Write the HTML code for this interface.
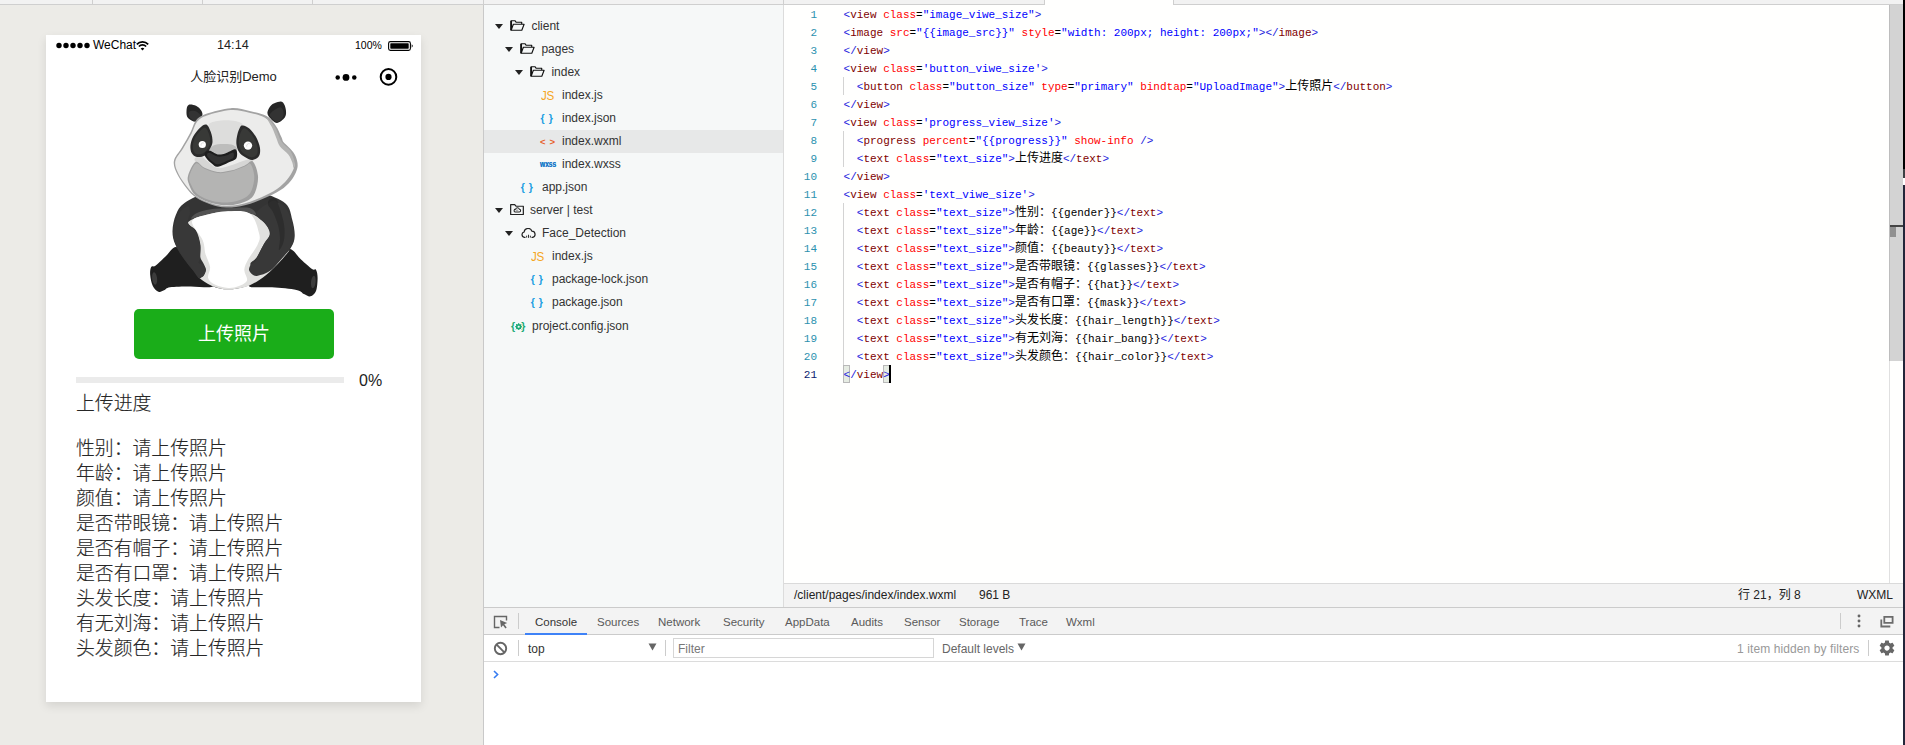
<!DOCTYPE html>
<html lang="zh-CN"><head><meta charset="utf-8"><title>人脸识别Demo</title>
<style>
*{box-sizing:border-box;margin:0;padding:0}
html,body{width:1905px;height:745px;overflow:hidden;background:#fff}
body{position:relative;font-family:"Liberation Sans","Noto Sans CJK SC",sans-serif;font-size:12px;color:#333}
.abs{position:absolute}
#sim{left:0;top:0;width:483px;height:745px;background:#ecebe7}
#topstrip{left:0;top:0;width:1903px;height:5px;background:#f2f2f2;border-bottom:1px solid #cfcfcf}
.tsep{position:absolute;top:0;width:1px;height:5px;background:#cfcfcf}
#phone{left:46px;top:35px;width:375px;height:667px;background:#fff;box-shadow:0 4px 9px rgba(0,0,0,.10)}
#tree{left:483px;top:5px;width:301px;height:602px;background:#f6f8f8;border-left:1px solid #c9c9c9;border-right:1px solid #dcdcdc}
.row{position:absolute;left:0;width:299px;height:23px;line-height:23px;white-space:nowrap;color:#333;font-size:12px}
.row.sel{background:#e7e8e8}
.row span.t{position:absolute;top:0}
.row svg{position:absolute}
#editor{left:784px;top:5px;width:1105px;height:578px;background:#fffffe}
.ln{position:absolute;margin-top:.7px;left:0;width:33px;text-align:right;color:#2b91af;font-family:"Liberation Mono",monospace;font-size:11px;height:18px;line-height:18px}
.cl{position:absolute;margin-top:.7px;letter-spacing:-.012px;left:59.6px;white-space:pre;font-family:"Liberation Mono","Noto Sans CJK SC",monospace;font-size:11px;height:18px;line-height:18px;color:#000}
.cl .cj{font-size:12px;line-height:0;font-family:"Noto Sans CJK SC",sans-serif}
.d{color:#2222dd}.tg{color:#800000}.an{color:#ff0000}.av{color:#0000ff}
.guide{position:absolute;left:59px;width:1px;background:#d3d3d3}
#status{left:784px;top:583px;width:1119px;height:24px;background:#f3f3f3;border-top:1px solid #dadada;font-size:12px;color:#222;line-height:23px}
#dev{left:483px;top:607px;width:1420px;height:138px;background:#fff;border-left:1px solid #c9c9c9}
#devtabs{left:0;top:0;width:1419px;height:28px;background:#f3f3f3;border-top:1px solid #cbcbcb;border-bottom:1px solid #cbcbcb}
.tab{position:absolute;top:1px;height:26px;line-height:27px;color:#5a5a5a;font-size:11.5px;white-space:nowrap}
#devfilter span{font-size:12px}
#devfilter{left:0;top:28px;width:1419px;height:27px;background:#fff;border-bottom:1px solid #dcdcdc}
.vsep{position:absolute;width:1px;background:#cccccc}
</style></head><body>
<div id="sim" class="abs"></div>
<div id="phone" class="abs">
<!-- status bar (coords relative to phone: page x-46, y-35) -->
<svg class="abs" style="left:10px;top:7px" width="34" height="7" viewBox="0 0 34 7"><circle cx="3" cy="3.5" r="2.7" fill="#000"/><circle cx="10" cy="3.5" r="2.7" fill="#000"/><circle cx="17" cy="3.5" r="2.7" fill="#000"/><circle cx="24" cy="3.5" r="2.7" fill="#000"/><circle cx="31" cy="3.5" r="2.7" fill="#000"/></svg>
<span class="abs" style="left:47px;top:2px;font-size:12px;line-height:16px;color:#000">WeChat</span>
<svg class="abs" style="left:90px;top:5.5px" width="13" height="10" viewBox="0 0 13 10"><path d="M0.8 3.3a8 8 0 0 1 11.4 0" fill="none" stroke="#000" stroke-width="1.8"/><path d="M2.9 5.5a5 5 0 0 1 7.2 0" fill="none" stroke="#000" stroke-width="1.8"/><path d="M4.7 7.5a2.6 2.6 0 0 1 3.6 0L6.5 9.6z" fill="#000"/></svg>
<span class="abs" style="left:171px;top:2px;font-size:12.7px;line-height:17px;color:#222">14:14</span>
<span class="abs" style="left:309px;top:3px;font-size:10.5px;line-height:15px;color:#000">100%</span>
<svg class="abs" style="left:342px;top:5.8px" width="26" height="11" viewBox="0 0 26 11"><rect x="0.6" y="0.6" width="21.8" height="8.8" rx="1.8" fill="none" stroke="#000" stroke-width="1.1"/><rect x="2.3" y="2.3" width="18.4" height="5.4" rx="0.6" fill="#000"/><path d="M23.7 3.3a2.2 2.2 0 0 1 0 3.4z" fill="#000"/></svg>
<!-- nav bar -->
<span class="abs" style="left:0;top:32px;width:375px;text-align:center;font-size:13px;line-height:20px;color:#222">人脸识别Demo</span>
<svg class="abs" style="left:289px;top:38px" width="22" height="9" viewBox="0 0 22 9"><circle cx="2.7" cy="4.5" r="2.25" fill="#000"/><circle cx="11" cy="4.4" r="3.4" fill="#000"/><circle cx="19.3" cy="4.5" r="2.25" fill="#000"/></svg>
<svg class="abs" style="left:333px;top:33px" width="19" height="19" viewBox="0 0 19 19"><circle cx="9.5" cy="8.9" r="7.8" fill="none" stroke="#000" stroke-width="2"/><circle cx="9.5" cy="8.9" r="3.1" fill="#000"/></svg>
<svg class="abs" style="left:84px;top:60px" width="210" height="210" viewBox="130 95 210 210">
<path d="M176 247C172.7 246.7 169.4 252.9 166 256C162.6 259.1 158.2 263.8 155.7 265.6C153.2 267.4 152.1 265.4 151.2 267C150.3 268.6 149.9 271.8 150.2 275C150.5 278.2 151.4 283.2 152.8 286C154.2 288.8 156.6 291.1 158.5 291.8C160.4 292.5 162.1 291.1 164 290.3C165.9 289.5 165.7 287.9 170 287.2C174.3 286.5 182.8 286.5 190 286.4C197.2 286.2 211.3 288.7 213 286.3C214.7 283.9 204.5 276.7 200 272C195.5 267.3 190 262.2 186 258C182 253.8 179.3 247.3 176 247Z" fill="#1f1f1f"/>
<path d="M290 249C293.5 249.1 297.3 256.2 301 259.5C304.7 262.8 309.5 267.3 312 269C314.5 270.7 315.1 268.3 316 269.8C316.9 271.3 317.6 274.5 317.6 278C317.6 281.5 317.2 287.9 316 291C314.8 294.1 312.5 295.8 310.5 296.3C308.5 296.8 306.3 295.1 304 294C301.7 292.9 301.8 291 296.5 289.9C291.2 288.8 279.9 287.9 272 287.3C264.1 286.7 250.3 288.4 249 286.2C247.7 284 258.8 278.5 264 274C269.2 269.5 275.7 263.2 280 259C284.3 254.8 286.5 248.9 290 249Z" fill="#1f1f1f"/>
<ellipse cx="154.6" cy="278.5" rx="2.5" ry="6.2" fill="#3c3c3c" transform="rotate(-6 154.6 278.5)"/>
<ellipse cx="313.3" cy="282" rx="2.3" ry="6.2" fill="#3c3c3c" transform="rotate(6 313.3 282)"/>
<path d="M188.5 104.9C190.1 104 193.9 104.9 196 105.8C198.1 106.7 200.2 108.8 201.2 110.5C202.2 112.2 203 114.1 202.1 116C201.2 117.9 198.3 121.5 196 121.8C193.7 122.1 189.6 119.8 188 118C186.4 116.2 186.4 113.2 186.5 111C186.6 108.8 186.9 105.8 188.5 104.9Z" fill="#262626"/>
<path d="M267.4 112.5C267.5 110.3 269.5 107 271.2 105.3C272.9 103.5 275.8 102.5 277.8 102C279.8 101.5 281.6 101.1 283 102.4C284.4 103.7 285.6 107.5 285.9 110C286.2 112.5 286.3 115.4 284.8 117.6C283.3 119.8 279.4 122.8 277 123C274.6 123.2 272.1 120.2 270.5 118.5C268.9 116.8 267.3 114.7 267.4 112.5Z" fill="#262626"/>
<path d="M189 112C189.8 110.8 193.2 110.6 195 111C196.8 111.4 199.1 113.3 200 114.5C200.9 115.7 201.2 116.9 200.5 118C199.8 119.1 197.8 121 196 121C194.2 121 191.2 119.5 190 118C188.8 116.5 188.2 113.2 189 112Z" fill="#333"/>
<path d="M270 114C270.8 112.5 274.2 110.1 276 109C277.8 107.9 279.8 107 281 107.5C282.2 108 283.2 110.2 283.5 112C283.8 113.8 283.6 116.3 282.5 118C281.4 119.7 278.8 122 277 122C275.2 122 272.7 119.3 271.5 118C270.3 116.7 269.2 115.5 270 114Z" fill="#333"/>
<path d="M184.5 203C179.2 206.8 177.9 210.2 175.9 214.8C173.9 219.5 172.6 226 172.5 230.9C172.4 235.8 173.3 239.6 175.2 244.3C177.1 249 180 253.7 183.9 259.1C187.8 264.5 194 272 198.7 276.5C203.4 281 207.2 283.8 212.1 285.9C217 288 222.4 289.3 228.2 289.3C234 289.3 240.7 288.2 247 285.9C253.3 283.5 260 279.7 265.8 275.2C271.6 270.7 277.6 263.8 281.9 259.1C286.1 254.4 289.2 250.8 291.3 247C293.4 243.2 294.5 240.7 294.7 236.2C294.9 231.7 293.8 225.5 292.3 220.1C290.8 214.7 290.6 208 285.5 203.5C280.4 199 270.2 195.2 262 193C253.8 190.8 245 190.2 236 190C227 189.8 216.6 189.8 208 192C199.4 194.2 189.8 199.2 184.5 203Z" fill="#343434"/>
<path d="M268 202C268.3 199.2 273.8 197.3 276 199C278.2 200.7 279.7 207.2 281 212C282.3 216.8 283.7 223.3 284 228C284.3 232.7 284 239.3 283 240C282 240.7 279.5 236 278 232C276.5 228 275.7 221 274 216C272.3 211 267.7 204.8 268 202Z" fill="#2a2a2a"/>
<path d="M191.3 218.8C190.4 218.4 193 215 196 213.4C199 211.8 203.7 210.3 209.4 209.4C215.1 208.5 223.3 208.2 230 208C236.7 207.8 245.3 206.9 249.7 208C254.1 209.1 256.4 213.9 256.4 214.8C256.4 215.7 254.8 214 249.7 213.4C244.5 212.8 233.6 211 225.5 211.4C217.4 211.8 207.1 214.9 201.4 216.1C195.7 217.3 192.2 219.2 191.3 218.8Z" fill="#525252"/>
<path d="M188 222.8C188.9 220.4 195.2 218 201.4 216.1C207.7 214.2 217.4 211.8 225.5 211.4C233.6 211 243.4 211.7 249.7 213.4C256 215.1 259.8 218.1 263.1 221.5C266.5 224.9 269.8 229.6 269.8 233.6C269.8 237.6 265.3 241.6 263.1 245.6C260.9 249.6 258.5 254.6 256.4 257.7C254.3 260.8 250.1 261.7 250.4 264.4C250.7 267.1 253.9 274.1 258 274C262.1 273.9 269.8 267.9 275 264C280.2 260.1 288.3 250.9 289.3 250.3C290.3 249.7 284.9 256.4 281 260.5C277.1 264.6 271.2 271 265.8 275.2C260.4 279.4 254.7 283.5 248.4 285.9C242.1 288.2 234.2 289.3 228.2 289.3C222.1 289.3 217 287.9 212.1 285.9C207.2 283.9 200.2 278.8 198.7 277.2C197.2 275.6 201.8 277.7 203 276.5C204.2 275.3 205.9 272.2 206 270C206.1 267.8 204.4 265.7 203.5 263.5C202.6 261.3 200.8 260.2 200.3 257C199.8 253.8 201 248.7 200.3 244.3C199.6 239.9 198.1 234.1 196 230.5C193.9 226.9 187.1 225.2 188 222.8Z" fill="#e1e1df"/>
<path d="M192 221.5C192.9 217.2 202.4 216.2 208 214.5C213.6 212.8 218.6 211.6 225.5 211.4C232.4 211.2 244.1 209.7 249.7 213.4C255.3 217.1 257.8 228.4 259.1 233.6C260.5 238.8 259.6 240.1 257.8 244.3C256 248.6 250.7 254.9 248.4 259.1C246.2 263.4 244.5 266.2 244.3 269.8C244.1 273.4 247.9 277.8 247 280.5C246.1 283.2 242.1 284.7 239 285.9C235.9 287.1 232.2 288.1 228.2 287.9C224.2 287.7 218.2 286.3 214.8 284.6C211.5 282.9 208.9 280.8 208.1 277.9C207.3 275 210.5 271.1 210.1 267.1C209.7 263.1 206.6 258.2 205.4 253.7C204.2 249.2 204.9 245.7 202.7 240.3C200.5 234.9 191.1 225.8 192 221.5Z" fill="#ffffff"/>
<path d="M188 206C186.1 206.2 181 209.8 178.5 214C176 218.2 173.6 225.9 173.2 231C172.8 236.1 173.9 239.8 175.8 244.5C177.7 249.2 181.6 255.2 184.5 259.5C187.4 263.8 190.6 267.4 193 270.5C195.4 273.6 197 277 198.7 277.9C200.4 278.8 202.3 277.1 203.4 275.8C204.5 274.5 205.5 271.7 205.4 269.8C205.3 267.9 203.8 265.5 202.7 264.4C201.6 263.3 199.1 264.2 198.7 263.1C198.2 262 199.8 260.8 200 257.7C200.2 254.6 200.7 248.6 200 244.3C199.3 240.1 198 235.8 196 232.2C194 228.6 189 226 188 222.8C187 219.6 190 215.8 190 213C190 210.2 189.9 205.8 188 206Z" fill="#383838"/>
<path d="M283 205C286.2 207.8 289.7 214.8 291.5 220C293.3 225.2 294.2 231.6 294 236.2C293.8 240.8 292.7 243.6 290.5 247.5C288.3 251.4 284.4 255.6 281 259.5C277.6 263.4 273.7 268.4 269.8 271.1C265.9 273.8 260.7 275.2 257.8 275.8C254.9 276.4 253.9 275.5 252.4 274.5C250.9 273.5 249.2 271.5 249 269.8C248.8 268.1 250 265.8 251 264.4C252 263 253.8 263.5 255.1 261.7C256.4 259.9 257.5 256.8 259.1 253.7C260.7 250.6 262.6 246.3 264.5 243C266.4 239.7 270.3 236.7 270.5 233.6C270.7 230.5 268.2 227.3 265.8 224.2C263.4 221.1 257 217.7 256.4 214.8C255.8 211.9 259.4 209 262 207C264.6 205 268.5 203.3 272 203C275.5 202.7 279.8 202.2 283 205Z" fill="#383838"/>
<path d="M268 204C268.5 202.2 273.8 199.3 276 201C278.2 202.7 280.1 209.3 281.5 214C282.9 218.7 284.2 224.3 284.5 229C284.8 233.7 284.4 238.5 283.5 242C282.6 245.5 279.6 250.7 279 250C278.4 249.3 280.2 242.2 280 238C279.8 233.8 279.2 229.3 278 225C276.8 220.7 274.7 215.5 273 212C271.3 208.5 267.5 205.8 268 204Z" fill="#2d2d2d"/>
<path d="M173.9 161C173.1 165.4 175.1 169.6 177.2 174.1C179.3 178.6 183.5 184.3 186.6 188.2C189.7 192.1 192.1 194.9 196 197.6C199.9 200.3 205.1 202.5 210.1 204.2C215.1 205.8 220.3 207.3 226.1 207.5C231.9 207.7 238.6 206.7 244.9 205.2C251.2 203.7 257.8 201.1 263.7 198.6C269.6 196.1 276.1 193.1 280.6 190.1C285.1 187.1 288.2 184 290.9 180.7C293.6 177.4 295.5 173.4 296.6 170.4C297.7 167.4 297.8 165.6 297.5 162.9C297.2 160.2 296.1 157 294.7 154.4C293.3 151.8 290.9 149.6 289 147.5C287.1 145.4 284.6 143.7 283.4 142C282.1 140.3 282.8 140 281.5 137.3C280.2 134.6 278.4 129.5 275.9 126C273.4 122.5 270.9 118.6 266.5 116.1C262.1 113.6 255.5 112.3 249.6 111C243.7 109.7 238 107.7 230.8 108.2C223.6 108.7 212.2 111.8 206.4 113.8C200.6 115.8 198.7 117.3 196 120.4C193.3 123.5 192.8 128.1 190.4 132.6C188.1 137.1 184.7 142.9 181.9 147.6C179.2 152.3 174.7 156.6 173.9 161Z" fill="#a3a3a3"/>
<path d="M175.3 161.2C174.5 165.5 176.4 169.4 178.4 173.8C180.4 178.2 184.5 183.6 187.6 187.4C190.7 191.2 193 193.8 196.8 196.4C200.6 199 205.6 201.3 210.5 202.9C215.4 204.5 220.5 205.9 226.1 206C231.7 206.1 238.3 205.1 244.2 203.6C250.1 202.1 256 199.6 261.5 197.2C267 194.8 272.7 191.9 277 189C281.3 186.1 284.5 182.7 287.2 179.5C289.9 176.3 292 172.6 293.2 169.8C294.4 167.1 294.5 165.4 294.2 163C293.9 160.6 292.8 157.7 291.5 155.4C290.2 153.2 288.2 151.4 286.5 149.5C284.8 147.6 282.3 145.9 281 144C279.7 142.1 279.9 140.6 278.6 137.8C277.4 135 275.8 130.5 273.5 127.2C271.2 123.9 269.1 120.2 265 117.8C260.9 115.4 254.9 114 249.2 112.7C243.5 111.4 237.8 109.5 230.8 110C223.8 110.5 212.6 113.5 207 115.4C201.4 117.3 199.7 118.6 197.2 121.6C194.7 124.6 194.1 128.8 191.8 133.2C189.5 137.6 185.9 143.5 183.2 148.2C180.4 152.9 176.1 156.9 175.3 161.2Z" fill="#ececeb"/>
<path d="M266.5 117.5C266.9 117.3 272.8 123.6 275 127C277.2 130.4 278.2 135.2 279.5 138C280.8 140.8 281.2 141.3 283 143.5C284.8 145.7 288.6 147.9 290.5 151C292.4 154.1 294 159.2 294.5 162C295 164.8 293.9 167.9 293.5 168C293.1 168.1 293.2 164.8 292.3 162.5C291.4 160.2 290.4 157.2 288.3 154.5C286.2 151.8 282 149.2 280 146.5C278 143.8 277.8 141.6 276.5 138.5C275.2 135.4 274 131.5 272.3 128C270.6 124.5 266.1 117.7 266.5 117.5Z" fill="#b4b4b3"/>
<path d="M209 124C210.6 121.9 216.7 121 221 120.5C225.3 120 231.3 120.2 235 121C238.7 121.8 242.4 122.7 243 125C243.6 127.3 239.4 131.3 238.5 135C237.6 138.7 238.2 144.2 237.5 147C236.8 149.8 236.1 150.8 234 152C231.9 153.2 227.8 154 225 154.5C222.2 155 219.7 155.5 217 155C214.3 154.5 209.8 153.5 209 151.5C208.2 149.5 211.6 146.1 212 143C212.4 139.9 212 136.2 211.5 133C211 129.8 207.4 126.1 209 124Z" fill="#dddddc"/>
<path d="M213.5 145.5C215.8 144.3 219.8 144.1 223 144C226.2 143.9 230.7 144 233 145C235.3 146 238.2 148.2 237 150C235.8 151.8 229.5 154.6 226 155.5C222.5 156.4 218.8 156.2 216 155.5C213.2 154.8 209.9 152.7 209.5 151C209.1 149.3 211.2 146.7 213.5 145.5Z" fill="#bdbdbc"/>
<path d="M194.5 160C193.8 157.9 198.1 156 200 156C201.9 156 203.1 158 206 160C208.9 162 213.3 167.2 217.6 168C221.9 168.8 227.3 166.3 232 165C236.7 163.7 242.4 160.8 246 160C249.6 159.2 253.5 159.4 253.5 160.5C253.5 161.6 249.8 164.7 246 166.5C242.2 168.3 235.7 170.4 231 171.5C226.3 172.6 222 173.3 217.6 172.8C213.2 172.3 208.3 170.7 204.5 168.6C200.7 166.5 195.2 162.1 194.5 160Z" fill="#d6d6d5"/>
<path d="M188 176C189 172.1 192.8 163.4 195.5 162C198.2 160.6 200.8 166.1 204.5 167.8C208.2 169.5 213.2 171.5 217.6 172C222 172.5 226.2 171.7 230.8 170.6C235.4 169.5 241.2 166.9 244.9 165.4C248.6 163.9 250.6 159.7 252.8 161.5C255 163.3 257.6 170.9 258 176C258.4 181.1 256.9 187.9 255.2 192C253.5 196.1 251.8 198.3 247.7 200.5C243.6 202.7 236.8 204.7 230.8 205.2C224.9 205.7 217.8 204.9 212 203.3C206.2 201.7 199.8 198.8 196 195.8C192.2 192.8 190.7 188.7 189.4 185.4C188.1 182.1 187 179.9 188 176Z" fill="#9f9f9f"/>
<path d="M189.3 176.5C190.1 172.9 193.5 164.8 196 163.5C198.5 162.2 200.9 167.2 204.5 168.8C208.1 170.4 213.2 172.5 217.6 173C222 173.5 226.3 172.7 230.8 171.6C235.3 170.5 241.2 167.9 244.5 166.6C247.8 165.3 248.9 162.3 250.5 164C252.1 165.7 254.1 172.1 254.3 176.5C254.5 180.9 253.1 186.9 251.5 190.5C249.9 194.1 248.2 196 244.5 198C240.8 200 234.8 201.8 229.5 202.3C224.2 202.8 217.8 202.3 212.5 201C207.2 199.7 201.1 196.9 197.5 194.2C193.9 191.5 192.6 187.9 191.2 185C189.8 182.1 188.5 180.1 189.3 176.5Z" fill="#b4b4b3"/>
<path d="M206.4 124.6C208.3 125.4 210 129.7 211 132.6C212 135.5 212.7 139.3 212.5 142C212.3 144.7 211.3 146.4 210.1 148.6C208.9 150.8 207.6 153.8 205.4 155.2C203.2 156.6 199.3 157.3 197 157C194.7 156.7 192.9 155.2 191.8 153.3C190.7 151.4 190.2 148.6 190.4 145.8C190.6 143 191.6 139.4 193.2 136.4C194.8 133.4 197.6 129.9 199.8 127.9C202 125.9 204.5 123.8 206.4 124.6Z" fill="#2b2b2b"/>
<path d="M243 125.5C244.6 125.8 247.4 126.8 249.6 128.8C251.8 130.8 254.5 134.2 256.2 137.3C257.9 140.4 259.4 144.5 259.9 147.6C260.4 150.7 260.2 154 259 156.1C257.8 158.2 254.8 159.8 252.4 159.9C250.1 160.1 247.1 158.3 244.9 157C242.7 155.7 240.6 154.5 239.2 152.3C237.8 150.1 236.7 146.9 236.4 143.9C236.1 140.9 236.8 137.3 237.4 134.5C238 131.7 239.3 128.5 240.2 127C241.1 125.5 241.4 125.2 243 125.5Z" fill="#2b2b2b"/>
<path d="M205.5 128C206.9 128.6 208.2 131.7 209 134C209.8 136.3 210.5 139.7 210.3 142C210.1 144.3 209.1 146.2 208 148C206.9 149.8 205.6 151.8 203.8 152.8C202.1 153.9 199.2 154.5 197.5 154.3C195.8 154.1 194.6 153 193.8 151.5C193 150 192.6 147.8 192.8 145.5C193 143.2 193.9 140 195.2 137.5C196.5 135 198.8 132.1 200.5 130.5C202.2 128.9 204.1 127.4 205.5 128Z" fill="#383937"/>
<path d="M243.5 128.5C245.1 127.8 247.2 129.8 249 131.5C250.8 133.2 252.8 135.8 254.2 138.5C255.6 141.2 257.1 144.9 257.5 147.6C257.9 150.3 257.7 152.9 256.8 154.5C255.9 156.1 253.8 157.2 252 157.3C250.2 157.4 247.8 156.1 246 155C244.2 153.9 242.5 152.8 241.3 151C240.1 149.2 239.1 146.5 238.8 143.9C238.5 141.3 238.8 138.1 239.6 135.5C240.4 132.9 241.9 129.2 243.5 128.5Z" fill="#383937"/>
<circle cx="202.3" cy="144.5" r="3.6" fill="#fff"/><circle cx="248" cy="145.6" r="4.2" fill="#fff"/>
<path d="M201.2 145.6a2 2 0 0 1 2.6-2.6" fill="none" stroke="#d0d0d0" stroke-width=".7"/><path d="M246.8 146.6a2.3 2.3 0 0 1 2.9-2.9" fill="none" stroke="#d0d0d0" stroke-width=".7"/>
<path d="M204.5 153.5C205 152.2 207 150.4 209.2 150.6C211.4 150.8 214.9 153.9 217.6 154.4C220.3 154.9 222.4 154.4 225.2 153.5C228 152.6 232.6 149.5 234.5 149.2C236.4 148.9 236.6 150.1 236.9 151.6C237.2 153.1 237.4 156.5 236.4 158.2C235.4 159.9 233.9 160.2 230.8 161.6C227.7 163 220.9 166.4 217.8 166.8C214.7 167.2 213.9 165.2 212 163.8C210.1 162.4 207.7 159.9 206.4 158.2C205.2 156.5 204 154.8 204.5 153.5Z" fill="#1e1e1e"/>
<path d="M207 154.5C207.2 153.7 207.8 152.5 209.5 152.8C211.2 153.2 214.8 156.1 217.5 156.6C220.2 157.1 223.4 156.3 226 155.6C228.6 154.9 231.8 152.1 233 152.4C234.2 152.7 234.2 156.2 233.5 157.5C232.8 158.8 231.6 158.9 229 160C226.4 161.1 220.7 164 218 164.3C215.3 164.6 214.6 163.1 213 162C211.4 160.9 209.5 159.1 208.5 157.8C207.5 156.6 206.8 155.3 207 154.5Z" fill="#333"/>
</svg>

<!-- button -->
<div class="abs" style="left:88px;top:274px;width:200px;height:50px;border-radius:5px;background:#1aad19;color:#fff;font-size:18px;line-height:50px;text-align:center">上传照片</div>
<!-- progress -->
<div class="abs" style="left:30px;top:342px;width:268px;height:6px;background:#ebebeb"></div>
<span class="abs" style="left:313px;top:335px;font-size:16px;line-height:22px;color:#222">0%</span>
<div class="abs" style="left:30px;top:356px;font-size:18.85px;font-weight:300;line-height:25px;color:#262626;-webkit-text-stroke:.15px #262626;white-space:nowrap">上传进度</div>
<div class="abs" style="left:30px;top:401px;font-size:18.85px;font-weight:300;line-height:25px;color:#262626;-webkit-text-stroke:.15px #262626;white-space:nowrap">性别：请上传照片<br>年龄：请上传照片<br>颜值：请上传照片<br>是否带眼镜：请上传照片<br>是否有帽子：请上传照片<br>是否有口罩：请上传照片<br>头发长度：请上传照片<br>有无刘海：请上传照片<br>头发颜色：请上传照片</div>
</div>

<div id="tree" class="abs">
<div class="row" style="top:10px"><svg style="left:11px;top:9px" width="8" height="5" viewBox="0 0 8 5"><path d="M0 0h8L4 5z" fill="#222"/></svg><svg style="left:25.9px;top:5.1px" width="15" height="11" viewBox="0 0 16 12"><path d="M1 11.2V0.8H5.2L6.6 2.5H12.6V4.4" fill="none" stroke="#111" stroke-width="1.25" stroke-linejoin="round"/><path d="M1.1 1V11" stroke="#111" stroke-width="1.9"/><path d="M1 11.2L3.5 4.6H15.2L12.7 11.2Z" fill="none" stroke="#111" stroke-width="1.25" stroke-linejoin="round"/></svg><span class="t" style="left:47.4px">client</span></div>
<div class="row" style="top:33px"><svg style="left:21px;top:9px" width="8" height="5" viewBox="0 0 8 5"><path d="M0 0h8L4 5z" fill="#222"/></svg><svg style="left:35.9px;top:5.1px" width="15" height="11" viewBox="0 0 16 12"><path d="M1 11.2V0.8H5.2L6.6 2.5H12.6V4.4" fill="none" stroke="#111" stroke-width="1.25" stroke-linejoin="round"/><path d="M1.1 1V11" stroke="#111" stroke-width="1.9"/><path d="M1 11.2L3.5 4.6H15.2L12.7 11.2Z" fill="none" stroke="#111" stroke-width="1.25" stroke-linejoin="round"/></svg><span class="t" style="left:57.4px">pages</span></div>
<div class="row" style="top:56px"><svg style="left:31px;top:9px" width="8" height="5" viewBox="0 0 8 5"><path d="M0 0h8L4 5z" fill="#222"/></svg><svg style="left:45.9px;top:5.1px" width="15" height="11" viewBox="0 0 16 12"><path d="M1 11.2V0.8H5.2L6.6 2.5H12.6V4.4" fill="none" stroke="#111" stroke-width="1.25" stroke-linejoin="round"/><path d="M1.1 1V11" stroke="#111" stroke-width="1.9"/><path d="M1 11.2L3.5 4.6H15.2L12.7 11.2Z" fill="none" stroke="#111" stroke-width="1.25" stroke-linejoin="round"/></svg><span class="t" style="left:67.4px">index</span></div>
<div class="row" style="top:79px"><span class="t" style="left:56.6px;color:#f5a623;font-size:13.5px;letter-spacing:-0.3px;display:inline-block;transform:scaleX(.86);transform-origin:0 50%;font-family:'Liberation Sans',sans-serif">JS</span><span class="t" style="left:78px">index.js</span></div>
<div class="row" style="top:102px"><span class="t" style="left:56.6px;color:#1b9de2;font-size:10.5px;font-weight:bold;letter-spacing:4px;font-family:'Liberation Sans',sans-serif;top:-0.5px">{}</span><span class="t" style="left:78px">index.json</span></div>
<div class="row sel" style="top:125px"><span class="t" style="left:56px;color:#e8602a;font-size:9.5px;font-weight:bold;letter-spacing:4px;font-family:'Liberation Sans',sans-serif">&lt;&gt;</span><span class="t" style="left:78px">index.wxml</span></div>
<div class="row" style="top:148px"><span class="t" style="left:55.7px;color:#1b78c8;font-size:9.5px;font-weight:bold;display:inline-block;transform:scaleX(.7);transform-origin:0 50%;font-family:'Liberation Sans',sans-serif;top:-1.5px;text-shadow:0 0 .4px #1b78c8">wxss</span><span class="t" style="left:78px">index.wxss</span></div>
<div class="row" style="top:171px"><span class="t" style="left:36.7px;color:#1b9de2;font-size:10.5px;font-weight:bold;letter-spacing:4px;font-family:'Liberation Sans',sans-serif;top:-0.5px">{}</span><span class="t" style="left:58px">app.json</span></div>
<div class="row" style="top:194px"><svg style="left:11px;top:9px" width="8" height="5" viewBox="0 0 8 5"><path d="M0 0h8L4 5z" fill="#222"/></svg><svg style="left:25.8px;top:5.3px" width="14" height="11.2" viewBox="0 0 15 12"><path d="M0.7 11.3V0.7H5L6.4 2.4H14.3V11.3Z" fill="none" stroke="#222" stroke-width="1.3" stroke-linejoin="round"/><path d="M5.4 8.6h4.4a1.5 1.5 0 0 0 .2-3 2.1 2.1 0 0 0-4-.1 1.6 1.6 0 0 0-.6 3.1z" fill="none" stroke="#222" stroke-width="1.1"/><path d="M6.6 7.1l.9-.9.9.9" fill="none" stroke="#222" stroke-width=".8"/></svg><span class="t" style="left:46px">server | test</span></div>
<div class="row" style="top:217px"><svg style="left:21px;top:9px" width="8" height="5" viewBox="0 0 8 5"><path d="M0 0h8L4 5z" fill="#222"/></svg><svg style="left:36.5px;top:6.3px" width="15" height="10.3" viewBox="0 0 16 11"><path d="M4.3 10H3.6A2.9 2.9 0 0 1 3.3 4.3 4.3 4.3 0 0 1 11.6 3.3 3.4 3.4 0 0 1 12.4 10H11.7" fill="none" stroke="#222" stroke-width="1.3" stroke-linecap="round"/><path d="M6 8.2v2M8 7.2v3.3M10 8.2v2" stroke="#222" stroke-width="1" fill="none"/></svg><span class="t" style="left:58px">Face_Detection</span></div>
<div class="row" style="top:240px"><span class="t" style="left:46.6px;color:#f5a623;font-size:13.5px;letter-spacing:-0.3px;display:inline-block;transform:scaleX(.86);transform-origin:0 50%;font-family:'Liberation Sans',sans-serif">JS</span><span class="t" style="left:68px">index.js</span></div>
<div class="row" style="top:263px"><span class="t" style="left:46.7px;color:#1b9de2;font-size:10.5px;font-weight:bold;letter-spacing:4px;font-family:'Liberation Sans',sans-serif;top:-0.5px">{}</span><span class="t" style="left:68px">package-lock.json</span></div>
<div class="row" style="top:286px"><span class="t" style="left:46.7px;color:#1b9de2;font-size:10.5px;font-weight:bold;letter-spacing:4px;font-family:'Liberation Sans',sans-serif;top:-0.5px">{}</span><span class="t" style="left:68px">package.json</span></div>
<div class="row" style="top:310px"><span class="t" style="left:27px;color:#19a974;font-size:10.5px;font-weight:bold;font-family:'Liberation Sans',sans-serif;top:-0.5px">{</span><svg style="left:30.6px;top:8px" width="7.4" height="7.4" viewBox="0 0 7 7"><circle cx="3.5" cy="3.5" r="1.9" fill="none" stroke="#19a974" stroke-width="1.5"/><path d="M3.5 0v7M0 3.5h7M1 1l5 5M6 1L1 6" stroke="#19a974" stroke-width=".9"/><circle cx="3.5" cy="3.5" r="1" fill="#f6f8f8"/></svg><span class="t" style="left:37.3px;color:#19a974;font-size:10.5px;font-weight:bold;font-family:'Liberation Sans',sans-serif;top:-0.5px">}</span><span class="t" style="left:48px">project.config.json</span></div>
</div>

<div id="editor" class="abs">
<div class="abs" style="left:59px;top:360px;width:6.8px;height:18px;background:#e6ece3;border:1px solid #b9b9b9"></div>
<div class="abs" style="left:98.8px;top:360px;width:7px;height:18px;background:#e6ece3;border:1px solid #b9b9b9"></div>
<div class="ln" style="top:0px">1</div><div class="cl" style="top:0px"><span class="d">&lt;</span><span class="tg">view</span> <span class="an">class</span>=<span class="av">"image_viwe_size"</span><span class="d">&gt;</span></div>
<div class="ln" style="top:18px">2</div><div class="cl" style="top:18px"><span class="d">&lt;</span><span class="tg">image</span> <span class="an">src</span>=<span class="av">"{{image_src}}"</span> <span class="an">style</span>=<span class="av">"width: 200px; height: 200px;"</span><span class="d">&gt;</span><span class="d">&lt;/</span><span class="tg">image</span><span class="d">&gt;</span></div>
<div class="ln" style="top:36px">3</div><div class="cl" style="top:36px"><span class="d">&lt;/</span><span class="tg">view</span><span class="d">&gt;</span></div>
<div class="ln" style="top:54px">4</div><div class="cl" style="top:54px"><span class="d">&lt;</span><span class="tg">view</span> <span class="an">class</span>=<span class="av">'button_viwe_size'</span><span class="d">&gt;</span></div>
<div class="ln" style="top:72px">5</div><div class="cl" style="top:72px">  <span class="d">&lt;</span><span class="tg">button</span> <span class="an">class</span>=<span class="av">"button_size"</span> <span class="an">type</span>=<span class="av">"primary"</span> <span class="an">bindtap</span>=<span class="av">"UploadImage"</span><span class="d">&gt;</span><span class="cj">上传照片</span><span class="d">&lt;/</span><span class="tg">button</span><span class="d">&gt;</span></div>
<div class="ln" style="top:90px">6</div><div class="cl" style="top:90px"><span class="d">&lt;/</span><span class="tg">view</span><span class="d">&gt;</span></div>
<div class="ln" style="top:108px">7</div><div class="cl" style="top:108px"><span class="d">&lt;</span><span class="tg">view</span> <span class="an">class</span>=<span class="av">'progress_view_size'</span><span class="d">&gt;</span></div>
<div class="ln" style="top:126px">8</div><div class="cl" style="top:126px">  <span class="d">&lt;</span><span class="tg">progress</span> <span class="an">percent</span>=<span class="av">"{{progress}}"</span> <span class="an">show-info</span> <span class="d">/&gt;</span></div>
<div class="ln" style="top:144px">9</div><div class="cl" style="top:144px">  <span class="d">&lt;</span><span class="tg">text</span> <span class="an">class</span>=<span class="av">"text_size"</span><span class="d">&gt;</span><span class="cj">上传进度</span><span class="d">&lt;/</span><span class="tg">text</span><span class="d">&gt;</span></div>
<div class="ln" style="top:162px">10</div><div class="cl" style="top:162px"><span class="d">&lt;/</span><span class="tg">view</span><span class="d">&gt;</span></div>
<div class="ln" style="top:180px">11</div><div class="cl" style="top:180px"><span class="d">&lt;</span><span class="tg">view</span> <span class="an">class</span>=<span class="av">'text_viwe_size'</span><span class="d">&gt;</span></div>
<div class="ln" style="top:198px">12</div><div class="cl" style="top:198px">  <span class="d">&lt;</span><span class="tg">text</span> <span class="an">class</span>=<span class="av">"text_size"</span><span class="d">&gt;</span><span class="cj">性别：</span>{{gender}}<span class="d">&lt;/</span><span class="tg">text</span><span class="d">&gt;</span></div>
<div class="ln" style="top:216px">13</div><div class="cl" style="top:216px">  <span class="d">&lt;</span><span class="tg">text</span> <span class="an">class</span>=<span class="av">"text_size"</span><span class="d">&gt;</span><span class="cj">年龄：</span>{{age}}<span class="d">&lt;/</span><span class="tg">text</span><span class="d">&gt;</span></div>
<div class="ln" style="top:234px">14</div><div class="cl" style="top:234px">  <span class="d">&lt;</span><span class="tg">text</span> <span class="an">class</span>=<span class="av">"text_size"</span><span class="d">&gt;</span><span class="cj">颜值：</span>{{beauty}}<span class="d">&lt;/</span><span class="tg">text</span><span class="d">&gt;</span></div>
<div class="ln" style="top:252px">15</div><div class="cl" style="top:252px">  <span class="d">&lt;</span><span class="tg">text</span> <span class="an">class</span>=<span class="av">"text_size"</span><span class="d">&gt;</span><span class="cj">是否带眼镜：</span>{{glasses}}<span class="d">&lt;/</span><span class="tg">text</span><span class="d">&gt;</span></div>
<div class="ln" style="top:270px">16</div><div class="cl" style="top:270px">  <span class="d">&lt;</span><span class="tg">text</span> <span class="an">class</span>=<span class="av">"text_size"</span><span class="d">&gt;</span><span class="cj">是否有帽子：</span>{{hat}}<span class="d">&lt;/</span><span class="tg">text</span><span class="d">&gt;</span></div>
<div class="ln" style="top:288px">17</div><div class="cl" style="top:288px">  <span class="d">&lt;</span><span class="tg">text</span> <span class="an">class</span>=<span class="av">"text_size"</span><span class="d">&gt;</span><span class="cj">是否有口罩：</span>{{mask}}<span class="d">&lt;/</span><span class="tg">text</span><span class="d">&gt;</span></div>
<div class="ln" style="top:306px">18</div><div class="cl" style="top:306px">  <span class="d">&lt;</span><span class="tg">text</span> <span class="an">class</span>=<span class="av">"text_size"</span><span class="d">&gt;</span><span class="cj">头发长度：</span>{{hair_length}}<span class="d">&lt;/</span><span class="tg">text</span><span class="d">&gt;</span></div>
<div class="ln" style="top:324px">19</div><div class="cl" style="top:324px">  <span class="d">&lt;</span><span class="tg">text</span> <span class="an">class</span>=<span class="av">"text_size"</span><span class="d">&gt;</span><span class="cj">有无刘海：</span>{{hair_bang}}<span class="d">&lt;/</span><span class="tg">text</span><span class="d">&gt;</span></div>
<div class="ln" style="top:342px">20</div><div class="cl" style="top:342px">  <span class="d">&lt;</span><span class="tg">text</span> <span class="an">class</span>=<span class="av">"text_size"</span><span class="d">&gt;</span><span class="cj">头发颜色：</span>{{hair_color}}<span class="d">&lt;/</span><span class="tg">text</span><span class="d">&gt;</span></div>
<div class="ln" style="top:360px;color:#0b216f">21</div><div class="cl" style="top:360px"><span class="d">&lt;/</span><span class="tg">view</span><span class="d">&gt;</span></div>
<div class="guide" style="top:72px;height:18px"></div>
<div class="guide" style="top:126px;height:36px"></div>
<div class="guide" style="top:198px;height:162px"></div>
<div class="abs" style="left:105px;top:360px;width:2px;height:18px;background:#000"></div>
</div>

<div id="status" class="abs">
<span class="abs" style="left:10px;top:0">/client/pages/index/index.wxml</span>
<span class="abs" style="left:195px;top:0">961 B</span>
<span class="abs" style="left:954px;top:0">行 21，列 8</span>
<span class="abs" style="left:1073px;top:0">WXML</span>
</div>

<div id="dev" class="abs">
<div id="devtabs" class="abs">
<svg class="abs" style="left:9px;top:6px" width="16" height="16" viewBox="0 0 16 16"><path d="M13.5 6.5V2.5H1.5V13.5H6.5" fill="none" stroke="#666" stroke-width="1.4"/><path d="M7 6l7.2 3-2.9 1.2 2.4 3.2-1.3 1-2.4-3.2L8 13.4z" fill="#666"/></svg>
<div class="vsep" style="left:34px;top:5px;height:16px"></div>
<span class="tab" style="left:51px;color:#333">Console</span>
<div class="abs" style="left:41px;top:25px;width:62px;height:2px;background:#3e82f7"></div>
<span class="tab" style="left:113px">Sources</span>
<span class="tab" style="left:174px">Network</span>
<span class="tab" style="left:239px">Security</span>
<span class="tab" style="left:301px">AppData</span>
<span class="tab" style="left:367px">Audits</span>
<span class="tab" style="left:420px">Sensor</span>
<span class="tab" style="left:475px">Storage</span>
<span class="tab" style="left:535px">Trace</span>
<span class="tab" style="left:582px">Wxml</span>
<div class="vsep" style="left:1356px;top:5px;height:16px"></div>
<svg class="abs" style="left:1372.3px;top:5.4px" width="6" height="16" viewBox="0 0 6 16"><circle cx="3" cy="3" r="1.45" fill="#666"/><circle cx="3" cy="8" r="1.45" fill="#666"/><circle cx="3" cy="13" r="1.45" fill="#666"/></svg>
<svg class="abs" style="left:1396.2px;top:7.5px" width="15" height="12" viewBox="0 0 15 12"><path d="M4.3 0.9h8.3v5.9h-8.3z" fill="none" stroke="#6b6b6b" stroke-width="1.8"/><path d="M1.3 3.6v6.9H10.3" fill="none" stroke="#6b6b6b" stroke-width="1.8"/></svg>
</div>
<div id="devfilter" class="abs">
<svg class="abs" style="left:9px;top:6px" width="15" height="15" viewBox="0 0 15 15"><circle cx="7.5" cy="7.5" r="5.7" fill="none" stroke="#666" stroke-width="1.9"/><path d="M3.4 3.4l8.2 8.2" stroke="#666" stroke-width="1.9"/></svg>
<div class="vsep" style="left:34px;top:5px;height:16px"></div>
<span class="abs" style="left:44px;top:0;line-height:29px;color:#333">top</span>
<svg class="abs" style="left:164px;top:8.3px" width="9" height="8" viewBox="0 0 9 8"><path d="M0.5 0.5h8L4.5 7.5z" fill="#666"/></svg>
<div class="vsep" style="left:181px;top:5px;height:16px"></div>
<div class="abs" style="left:189px;top:3px;width:261px;height:20px;border:1px solid #d6d6d6;background:#fff"></div>
<span class="abs" style="left:194px;top:0;line-height:29px;color:#777">Filter</span>
<span class="abs" style="left:458px;top:0;line-height:29px;color:#666">Default levels</span>
<svg class="abs" style="left:533px;top:8.3px" width="9" height="8" viewBox="0 0 9 8"><path d="M0.5 0.5h8L4.5 7.5z" fill="#666"/></svg>
<span class="abs" style="left:1253px;top:0;line-height:29px;letter-spacing:.1px;color:#999">1 item hidden by filters</span>
<div class="vsep" style="left:1384px;top:5px;height:16px"></div>
<svg class="abs" style="left:1394.4px;top:4.3px" width="18" height="18" viewBox="0 0 24 24"><path fill="#666" d="M19.43 12.98c.04-.32.07-.64.07-.98s-.03-.66-.07-.98l2.11-1.65c.19-.15.24-.42.12-.64l-2-3.46c-.12-.22-.39-.3-.61-.22l-2.49 1c-.52-.4-1.08-.73-1.69-.98l-.38-2.65C14.46 2.18 14.25 2 14 2h-4c-.25 0-.46.18-.49.42l-.38 2.65c-.61.25-1.17.59-1.69.98l-2.49-1c-.23-.09-.49 0-.61.22l-2 3.46c-.13.22-.07.49.12.64l2.11 1.65c-.04.32-.07.65-.07.98s.03.66.07.98l-2.11 1.65c-.19.15-.24.42-.12.64l2 3.46c.12.22.39.3.61.22l2.49-1c.52.4 1.08.73 1.69.98l.38 2.65c.03.24.24.42.49.42h4c.25 0 .46-.18.49-.42l.38-2.65c.61-.25 1.17-.59 1.69-.98l2.49 1c.23.09.49 0 .61-.22l2-3.46c.12-.22.07-.49-.12-.64l-2.11-1.65zM12 15.5c-1.93 0-3.5-1.57-3.5-3.5s1.57-3.5 3.5-3.5 3.5 1.57 3.5 3.5-1.57 3.5-3.5 3.5z"/></svg>
</div>
<svg class="abs" style="left:9.4px;top:62.5px" width="6" height="9" viewBox="0 0 6 9"><path d="M1 1l3.6 3.5L1 8" fill="none" stroke="#367cf1" stroke-width="1.6"/></svg>
</div>

<div id="topstrip" class="abs">
<div class="tsep" style="left:92px"></div><div class="tsep" style="left:202px"></div><div class="tsep" style="left:312px"></div><div class="tsep" style="left:483px"></div><div class="tsep" style="left:783px"></div>
<div class="abs" style="left:1044px;top:0;width:130px;height:5px;background:#fffffe;border-left:1px solid #cfcfcf;border-right:1px solid #cfcfcf"></div>
</div>
<div class="abs" style="left:1889px;top:5px;width:14px;height:578px;background:#fffffe;border-left:1px solid #e0e0e0"></div>
<div class="abs" style="left:1889px;top:5px;width:14px;height:356px;background:#d3d3d3;border-left:1px solid #bdbdbd"></div>
<div class="abs" style="left:1890px;top:225px;width:13px;height:2px;background:#444"></div>
<div class="abs" style="left:1890px;top:227px;width:6px;height:10px;background:#909090"></div>
<div class="abs" style="left:1903px;top:0;width:2px;height:745px;background:#24263a"></div>
<div class="abs" style="left:1903px;top:0;width:2px;height:169px;background:#000"></div>
<div class="abs" style="left:1903px;top:169px;width:2px;height:9px;background:#3c4043"></div>
<div class="abs" style="left:1903px;top:178px;width:2px;height:7px;background:#fff"></div>

</body></html>
